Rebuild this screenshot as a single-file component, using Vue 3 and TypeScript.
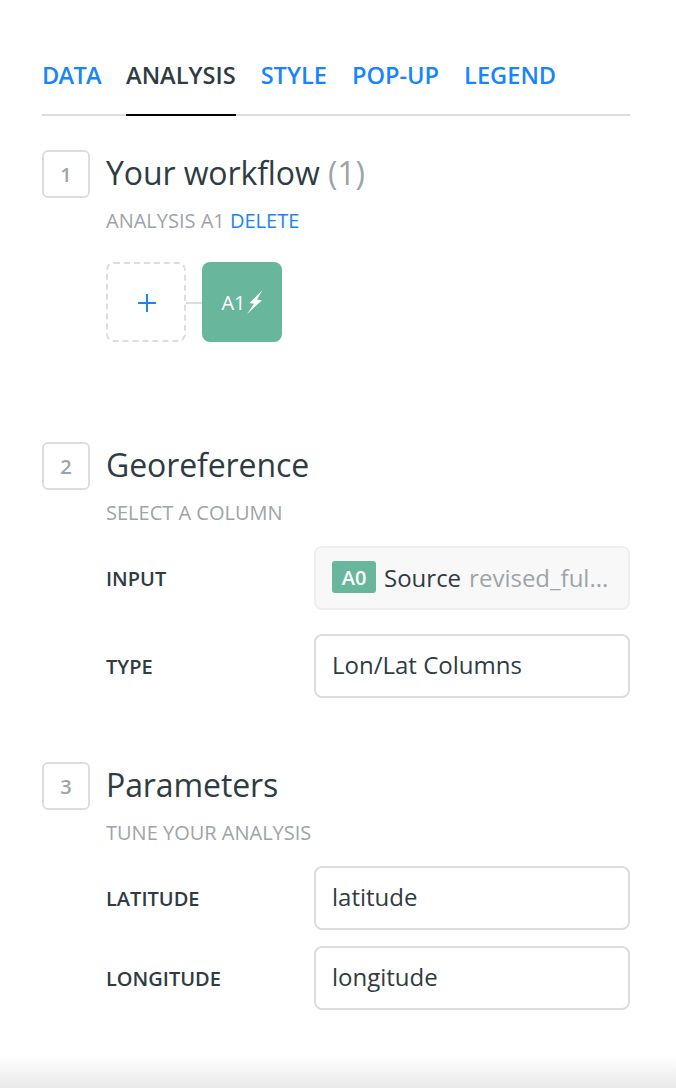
<script setup lang="ts">
const tabs: { label: string; active?: boolean }[] = [
  { label: 'DATA' },
  { label: 'ANALYSIS', active: true },
  { label: 'STYLE' },
  { label: 'POP-UP' },
  { label: 'LEGEND' },
]
</script>

<template>
  <div class="page">
    <nav class="tabs">
      <span v-for="t in tabs" :key="t.label" class="tab" :class="{ active: t.active }">{{ t.label }}</span>
    </nav>

    <section class="step step-1">
      <div class="num">1</div>
      <div class="body">
        <h2 class="title">Your workflow <span class="muted">(1)</span></h2>
        <p class="sub">ANALYSIS A1 <span class="link">DELETE</span></p>
        <div class="flow">
          <div class="add">
            <svg width="20" height="20" viewBox="0 0 20 20"><path d="M11 2v18M2 11h18" stroke="#1785fb" stroke-width="2" fill="none" /></svg>
          </div>
          <div class="connector"></div>
          <div class="node">
            <span>A1</span>
            <svg class="bolt" width="16" height="24" viewBox="0 0 16 24"><path d="M15.5 0 L2.5 13 L7 13.8 L0 24 L15 10.3 L10 9.5 Z" fill="#fff" /></svg>
          </div>
        </div>
      </div>
    </section>

    <section class="step step-2">
      <div class="num">2</div>
      <div class="body">
        <h2 class="title">Georeference</h2>
        <p class="sub">SELECT A COLUMN</p>
        <div class="rows rows-geo">
          <div class="row">
            <span class="label">INPUT</span>
            <div class="field disabled">
              <span class="badge">A0</span>
              <span class="src">Source</span>
              <span class="file">revised_ful...</span>
            </div>
          </div>
          <div class="row">
            <span class="label">TYPE</span>
            <div class="field">Lon/Lat Columns</div>
          </div>
        </div>
      </div>
    </section>

    <section class="step step-3">
      <div class="num">3</div>
      <div class="body">
        <h2 class="title">Parameters</h2>
        <p class="sub">TUNE YOUR ANALYSIS</p>
        <div class="rows rows-params">
          <div class="row">
            <span class="label">LATITUDE</span>
            <div class="field">latitude</div>
          </div>
          <div class="row">
            <span class="label">LONGITUDE</span>
            <div class="field">longitude</div>
          </div>
        </div>
      </div>
    </section>

    <div class="fade"></div>
  </div>
</template>

<style>
html, body { margin: 0; background: #fff; }
</style>

<style scoped>
.page {
  position: relative;
  box-sizing: border-box;
  width: 676px;
  height: 1088px;
  padding: 60px 46px 0 42px;
  overflow: hidden;
  font-family: "Open Sans", sans-serif;
  color: #2e3c43;
  background: #fff;
}
.tabs {
  display: flex;
  gap: 25px;
  height: 56px;
  box-sizing: border-box;
  border-bottom: 2px solid #dddddd;
}
.tab {
  height: 56px;
  box-sizing: border-box;
  font-size: 23.6px;
  font-weight: 600;
  line-height: 30px;
  color: #1785fb;
}
.tab:first-child { letter-spacing: -0.7px; }
.tab.active {
  color: #2e3c43;
  border-bottom: 2px solid #000;
}
.step { display: flex; gap: 16px; }
.step-1 { margin-top: 34px; }
.step-2 { margin-top: 100px; }
.step-3 { margin-top: 64px; }
.num {
  flex: none;
  box-sizing: border-box;
  width: 48px;
  height: 48px;
  border: 2px solid #dddddd;
  border-radius: 6px;
  display: flex;
  align-items: center;
  justify-content: center;
  font-size: 20px;
  font-weight: 600;
  color: #9da4a8;
}
.body { flex: 1; min-width: 0; }
.title {
  margin: 0;
  font-size: 32px;
  font-weight: 400;
  line-height: 46px;
  letter-spacing: -0.1px;
}
.muted { color: #9da4a8; }
.sub {
  margin: 10px 0 0;
  font-size: 20px;
  line-height: 30px;
  color: #9da4a8;
}
.link { color: #1785fb; }
.flow {
  display: flex;
  align-items: center;
  margin-top: 26px;
}
.add {
  box-sizing: border-box;
  width: 80px;
  height: 80px;
  border: 2px dashed #dddddd;
  border-radius: 8px;
  display: flex;
  align-items: center;
  justify-content: center;
}
.connector { width: 16px; height: 2px; margin-top: 2px; background: #dddddd; }
.node {
  width: 80px;
  height: 80px;
  border-radius: 8px;
  background: #68b79d;
  color: #fff;
  display: flex;
  align-items: center;
  justify-content: center;
  font-size: 20px;
}
.bolt { flex: none; margin-left: 1px; }
.rows { display: flex; flex-direction: column; }
.rows-geo { margin-top: 18px; gap: 24px; }
.rows-params { margin-top: 18px; gap: 16px; }
.row { display: flex; align-items: center; }
.label {
  width: 208px;
  flex: none;
  font-size: 20px;
  font-weight: 600;
  color: #2e3c43;
}
.field {
  box-sizing: border-box;
  flex: 1;
  min-width: 0;
  height: 64px;
  padding: 0 16px 3px;
  border: 2px solid #dddddd;
  border-radius: 8px;
  display: flex;
  align-items: center;
  font-size: 24px;
  color: #2e3c43;
  background: #fff;
  white-space: nowrap;
}
.field.disabled { padding-bottom: 2px; background: #f8f8f8; border-color: #eeeeee; }
.badge {
  width: 44px;
  height: 32px;
  flex: none;
  border-radius: 3px;
  background: #68b79d;
  color: #fff;
  font-size: 20px;
  font-weight: 600;
  display: flex;
  align-items: center;
  justify-content: center;
  margin-right: 8px;
}
.file { margin-left: 8px; color: #9da4a8; }
.fade {
  position: absolute;
  left: 0;
  right: 0;
  bottom: 0;
  height: 33px;
  background: linear-gradient(to bottom, rgba(232,232,232,0), #e9e9e9);
}
</style>
